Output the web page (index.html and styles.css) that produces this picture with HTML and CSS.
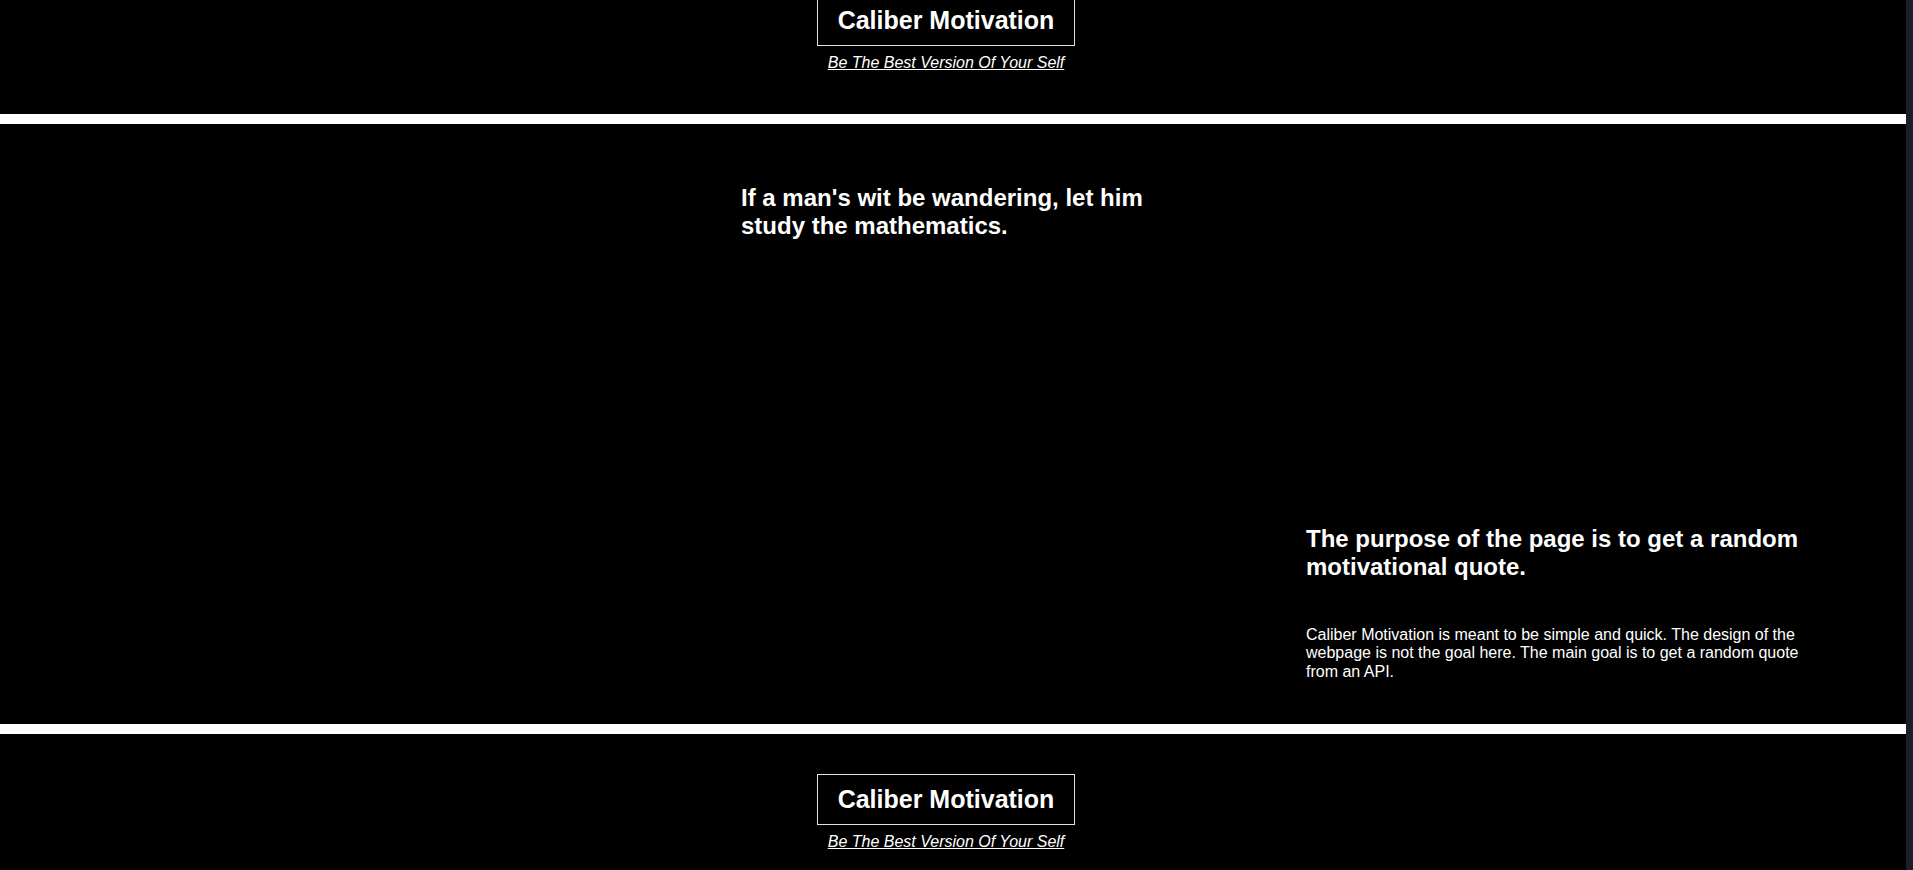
FILE: index.html
```html
<!DOCTYPE html>
<html lang="en">
<head>
<meta charset="utf-8">
<title>Caliber Motivation</title>
<link rel="stylesheet" href="styles.css">
</head>
<body>
<div class="page">
  <header class="brand brand-top">
    <h1 class="brand-title">Caliber Motivation</h1>
    <a class="brand-tagline" href="#">Be The Best Version Of Your Self</a>
  </header>
  <main class="content">
    <section class="quote">
      <h2 class="quote-text">If a man's wit be wandering, let him study the mathematics.</h2>
    </section>
    <section class="about">
      <h2 class="about-title">The purpose of the page is to get a random motivational quote.</h2>
      <p class="about-text">Caliber Motivation is meant to be simple and quick. The design of the webpage is not the goal here. The main goal is to get a random quote from an API.</p>
    </section>
  </main>
  <footer class="brand brand-bottom">
    <h1 class="brand-title">Caliber Motivation</h1>
    <a class="brand-tagline" href="#">Be The Best Version Of Your Self</a>
  </footer>
</div>
</body>
</html>
```
FILE: styles.css
```css
html {
  background: #1b1e29;
  height: 100%;
}
body {
  margin: 0;
  height: 870px;
  overflow: hidden;
  font-family: "Liberation Sans", Arial, sans-serif;
  color: #fff;
}
.page {
  width: calc(100% - 7px);
  background: #000;
  min-height: 100%;
}
.brand {
  display: flex;
  flex-direction: column;
  align-items: center;
  padding-right: 14px;
}
.brand-top {
  padding-bottom: 42px;
}
.brand-top .brand-title {
  margin-top: -5px;
}
.brand-bottom {
  padding-top: 40px;
  padding-bottom: 40px;
}
.brand-title {
  margin: 0;
  font-size: 25px;
  line-height: 28.75px;
  font-weight: 700;
  padding: 10px 20px;
  border: 1px solid #e2e2e2;
}
.brand-tagline {
  margin-top: 8px;
  font-size: 16px;
  line-height: 18.4px;
  font-style: italic;
  color: #fff;
  text-decoration: underline;
}
.content {
  display: grid;
  grid-template-columns: 741px 565px 510px 1fr;
  height: 600px;
  box-sizing: content-box;
  border-top: 10px solid #fff;
  border-bottom: 10px solid #fff;
}
.quote {
  grid-column: 2;
  align-self: start;
  padding-top: 60px;
}
.quote-text {
  margin: 0;
  width: 430px;
  font-size: 24px;
  line-height: 27.6px;
  font-weight: 700;
}
.about {
  grid-column: 3;
  align-self: end;
  padding-bottom: 43px;
}
.about-title {
  margin: 0 0 45px;
  font-size: 24px;
  line-height: 28px;
  font-weight: 700;
}
.about-text {
  margin: 0;
  font-size: 16px;
  line-height: 18.4px;
}
```
